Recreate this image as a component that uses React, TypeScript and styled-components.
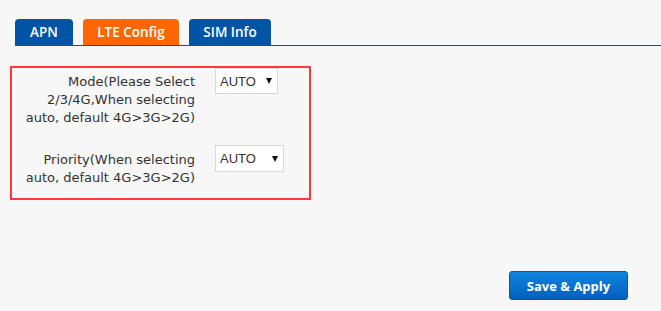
import React from "react";
import styled, { createGlobalStyle } from "styled-components";

const Global = createGlobalStyle`
  html, body {
    margin: 0;
    padding: 0;
    background: #f7f7f7;
  }
  body {
    width: 661px;
    height: 311px;
    overflow: hidden;
    font-family: "DejaVu Sans", Verdana, sans-serif;
  }
`;

const Page = styled.div`
  display: flex;
  flex-direction: column;
  padding-top: 19px;
`;

const TabBar = styled.div`
  display: flex;
  gap: 10px;
  margin-left: 15px;
  border-bottom: 1px solid #0054a6;
`;

const Tab = styled.button<{ $active?: boolean; $w: number }>`
  width: ${(p) => p.$w}px;
  height: 26px;
  padding: 0;
  border: none;
  border-radius: 4px 4px 0 0;
  background: ${(p) => (p.$active ? "#ff6600" : "#0054a6")};
  color: #fff;
  font-family: "Open Sans", sans-serif;
  font-weight: 600;
  font-size: 13.5px;
  line-height: 26px;
  text-align: center;
  cursor: pointer;
`;

const ConfigBox = styled.div`
  box-sizing: border-box;
  margin: 20px 0 0 10px;
  width: 301px;
  border: 2px solid #ff3a3a;
  padding: 0 0 11px 7px;
  display: flex;
  flex-direction: column;
  gap: 18px;
`;

const Row = styled.div`
  display: flex;
  align-items: flex-start;
  gap: 20px;
`;

const Label = styled.label<{ $top: number }>`
  width: 176px;
  padding-top: ${(p) => p.$top}px;
  text-align: right;
  font-family: "DejaVu Sans", Verdana, sans-serif;
  font-size: 13px;
  line-height: 18px;
  color: #333;
`;

const SelectWrap = styled.div`
  position: relative;
  display: inline-block;
`;

const Select = styled.select<{ $w: number; $h: number }>`
  appearance: none;
  -webkit-appearance: none;
  width: ${(p) => p.$w}px;
  height: ${(p) => p.$h}px;
  border: 1px solid #d9d9d9;
  border-radius: 0;
  background: #fff;
  padding: 0 0 0 4px;
  margin: 0;
  font-family: "Liberation Sans", Arial, sans-serif;
  font-size: 13px;
  color: #333;
  outline: none;
`;

const Arrow = styled.span<{ $right: number }>`
  position: absolute;
  top: 50%;
  right: ${(p) => p.$right}px;
  margin-top: -3px;
  width: 0;
  height: 0;
  border-left: 3.5px solid transparent;
  border-right: 3.5px solid transparent;
  border-top: 6px solid #111;
  pointer-events: none;
`;

const Footer = styled.div`
  display: flex;
  justify-content: flex-end;
  padding: 71px 33px 0 0;
`;

const SaveButton = styled.button`
  width: 119px;
  height: 29px;
  border: 1px solid #0058b4;
  border-radius: 3px;
  background: linear-gradient(to bottom, #0f84e0 0%, #0a6fcf 55%, #005fbd 100%);
  color: #fff;
  font-family: "Open Sans", sans-serif;
  font-weight: 700;
  font-size: 13px;
  cursor: pointer;
  padding: 0;
`;

export default function App() {
  return (
    <>
      <Global />
      <Page>
        <TabBar>
          <Tab $w={58}>APN</Tab>
          <Tab $w={96} $active>
            LTE Config
          </Tab>
          <Tab $w={82}>SIM Info</Tab>
        </TabBar>
        <ConfigBox>
          <Row>
            <Label $top={5}>
              Mode(Please Select 2/3/4G,When selecting auto, default 4G&gt;3G&gt;2G)
            </Label>
            <SelectWrap>
              <Select $w={63} $h={26} defaultValue="AUTO">
                <option>AUTO</option>
                <option>4G</option>
                <option>3G</option>
                <option>2G</option>
              </Select>
              <Arrow $right={6} />
            </SelectWrap>
          </Row>
          <Row>
            <Label $top={6}>
              Priority(When selecting auto, default 4G&gt;3G&gt;2G)
            </Label>
            <SelectWrap>
              <Select $w={69} $h={27} defaultValue="AUTO">
                <option>AUTO</option>
                <option>4G</option>
                <option>3G</option>
                <option>2G</option>
              </Select>
              <Arrow $right={6} />
            </SelectWrap>
          </Row>
        </ConfigBox>
        <Footer>
          <SaveButton>Save &amp; Apply</SaveButton>
        </Footer>
      </Page>
    </>
  );
}
